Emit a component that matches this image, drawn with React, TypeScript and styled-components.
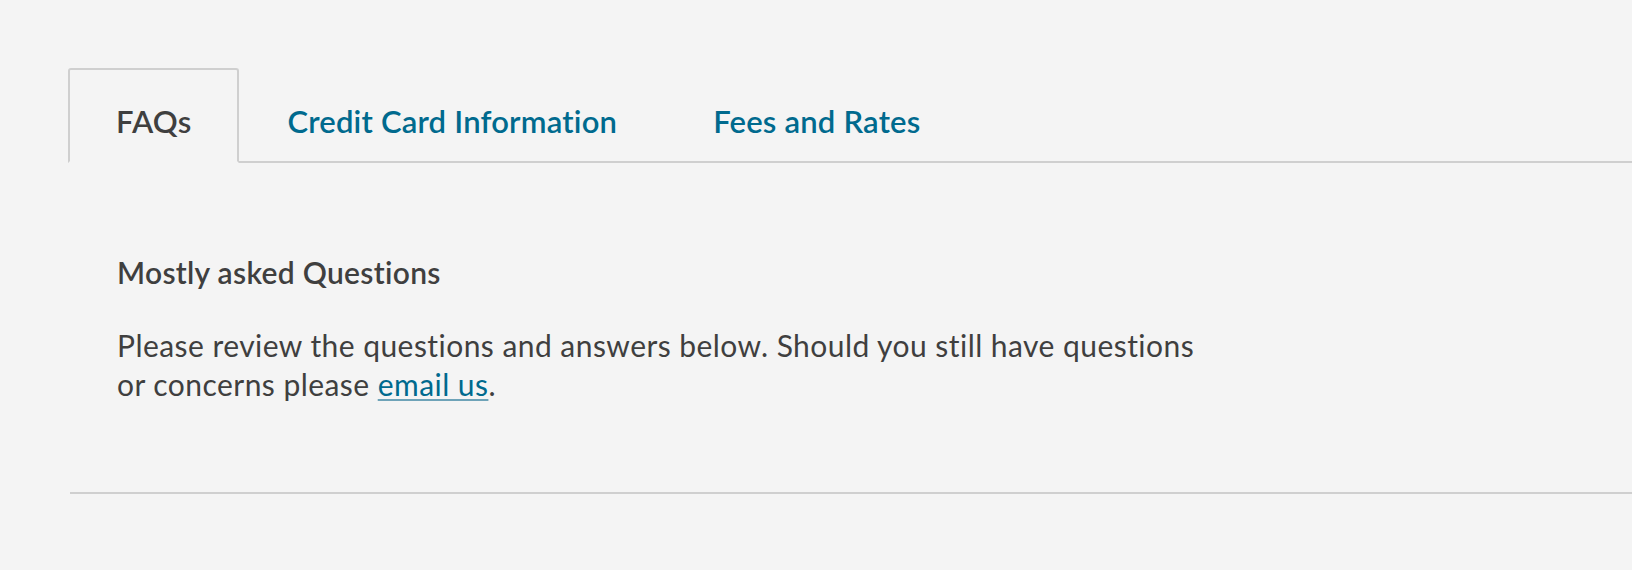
import React from "react";
import styled, { createGlobalStyle } from "styled-components";

const GlobalStyle = createGlobalStyle`
  html, body {
    margin: 0;
    padding: 0;
    background: #f4f4f4;
  }
  body {
    font-family: "Lato", "Open Sans", sans-serif;
    color: #3f3f3f;
    overflow: hidden;
  }
`;

const Page = styled.div`
  padding: 68px 0 0 68px;
  min-height: 570px;
  box-sizing: border-box;
`;

const TabList = styled.div`
  display: flex;
  align-items: flex-end;
  border-bottom: 2px solid #cfcfcf;
`;

const Tab = styled.button<{ $active?: boolean }>`
  appearance: none;
  font-family: inherit;
  font-size: 31px;
  line-height: 30px;
  font-weight: 600;
  letter-spacing: 0.2px;
  padding: 36px 46px 25px;
  margin-bottom: -2px;
  background: ${(p) => (p.$active ? "#f4f4f4" : "transparent")};
  border: 2px solid ${(p) => (p.$active ? "#cfcfcf" : "transparent")};
  border-bottom: 2px solid ${(p) => (p.$active ? "#f4f4f4" : "transparent")};
  border-radius: 3px 3px 0 0;
  color: ${(p) => (p.$active ? "#3f3f3f" : "#006a8e")};
  cursor: pointer;
`;

const Panel = styled.section`
  padding: 94px 0 88px 47px;
  margin-left: 2px;
  border-bottom: 2px solid #cfcfcf;
`;

const Heading = styled.h2`
  margin: 0 0 39px;
  font-size: 30px;
  line-height: 30px;
  font-weight: 600;
  letter-spacing: 0.3px;
  color: #3f3f3f;
`;

const Body = styled.p`
  margin: 0;
  font-size: 30px;
  line-height: 39px;
  font-weight: 400;
  letter-spacing: 0.45px;
  color: #3f3f3f;
`;

const Link = styled.a`
  color: #006a8e;
  text-decoration: underline;
  text-decoration-color: #6ea3b8;
  text-decoration-thickness: 2px;
  text-underline-offset: 3px;
`;

export default function App() {
  return (
    <>
      <GlobalStyle />
      <Page>
        <TabList>
          <Tab $active>FAQs</Tab>
          <Tab>Credit Card Information</Tab>
          <Tab>Fees and Rates</Tab>
        </TabList>
        <Panel>
          <Heading>Mostly asked Questions</Heading>
          <Body>
            Please review the questions and answers below. Should you still have questions
            <br />
            or concerns please <Link href="#">email us</Link>.
          </Body>
        </Panel>
      </Page>
    </>
  );
}
